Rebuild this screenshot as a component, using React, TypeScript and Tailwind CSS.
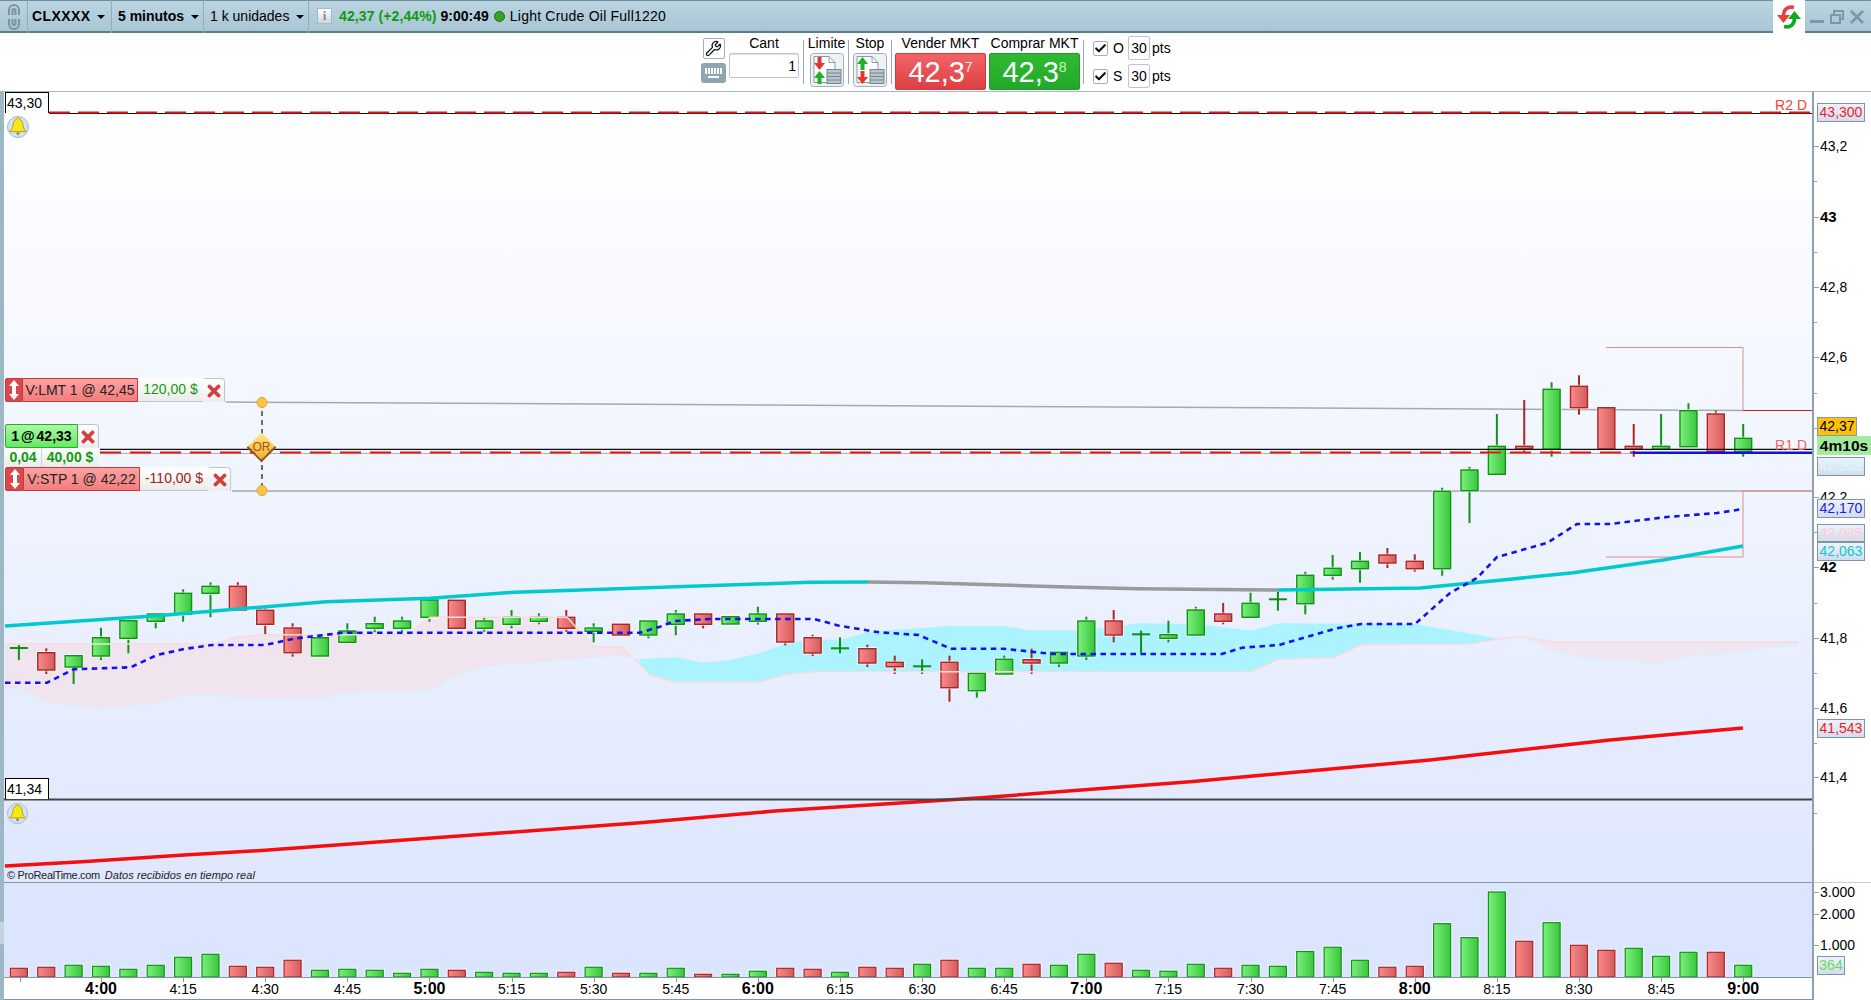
import { Check, Wrench } from "lucide-react";

const barX = (i: number) => 101 + 27.37 * i;

type Candle = [number, number, number, number, "g" | "r" | "d"];

// body top, body bottom, wick top, wick bottom. first entry is bar -3
const candles: Candle[] = [
  [648, 648, 645, 660, "d"],
  [652.7, 670, 648.3, 674, "r"],
  [655.7, 667, 655.7, 684, "g"],
  [637.7, 656, 627.7, 660, "g"],
  [620.7, 638.3, 619.3, 653.3, "g"],
  [614, 621.3, 613.3, 628.3, "g"],
  [593.3, 614.3, 589.3, 621.7, "g"],
  [586.3, 593.3, 582.3, 617.3, "g"],
  [586.3, 610, 582.3, 610, "r"],
  [610.3, 624.3, 608.3, 634.7, "r"],
  [628, 652.7, 623.3, 656.7, "r"],
  [637.7, 656, 635.7, 656, "g"],
  [631, 642.3, 623.3, 642.3, "g"],
  [623.7, 628.3, 616.7, 632.3, "g"],
  [621, 628.3, 616.7, 631.7, "g"],
  [600, 617.3, 598.3, 621.7, "g"],
  [600.3, 628.3, 600.3, 628.3, "r"],
  [621, 628.3, 617.3, 631.7, "g"],
  [617.3, 624.3, 610, 628.3, "g"],
  [617.3, 621.3, 613.3, 624.3, "g"],
  [617.3, 628.3, 610, 631.7, "r"],
  [628, 631.3, 623.3, 642.3, "g"],
  [624.3, 635, 624.3, 635, "r"],
  [621, 635, 621, 638.3, "g"],
  [614, 624.3, 610, 635.3, "g"],
  [614, 624.3, 614, 628.3, "r"],
  [616.7, 624, 616.7, 624, "g"],
  [614, 621.3, 606.7, 624.7, "g"],
  [614, 642, 614, 645.3, "r"],
  [637.7, 653, 634.7, 656, "r"],
  [648.3, 648.3, 637.3, 653.3, "d"],
  [648.7, 663, 644.7, 667, "r"],
  [662.3, 666.7, 655.7, 674, "r"],
  [666.3, 666.3, 659.3, 674, "d"],
  [662.3, 687.7, 655.7, 701.7, "r"],
  [673.3, 690.7, 673.3, 697.7, "g"],
  [659.3, 674, 655.7, 674, "g"],
  [659.7, 663, 648.7, 674, "r"],
  [652.3, 663, 652.3, 667, "g"],
  [621, 656, 616.7, 660, "g"],
  [621, 635, 610, 642.3, "r"],
  [634.3, 634.3, 630.7, 653.3, "d"],
  [634.7, 638.3, 620.7, 642.3, "g"],
  [610, 635, 606.7, 635, "g"],
  [614, 621.3, 603, 624.3, "r"],
  [603.3, 617.3, 592.7, 617.3, "g"],
  [599.3, 599.3, 592, 610.7, "d"],
  [575.3, 603.7, 571.7, 614.3, "g"],
  [568.3, 575.3, 555, 579.7, "g"],
  [561.3, 568.7, 552, 582.7, "g"],
  [555, 563, 548, 568, "r"],
  [561.3, 568.7, 554.3, 571.7, "r"],
  [491.3, 568.7, 487.7, 575.7, "g"],
  [470, 490.7, 466.7, 523, "g"],
  [446.3, 474.3, 414, 474.3, "g"],
  [446.3, 449, 400, 452.7, "r"],
  [389.3, 449.3, 382.3, 456.7, "g"],
  [386.3, 407.7, 375.3, 414.7, "r"],
  [407.7, 449, 407.7, 449, "r"],
  [446.3, 449.3, 424, 456.7, "r"],
  [446.3, 449.3, 414, 449.3, "g"],
  [410.7, 446.7, 403.3, 446.7, "g"],
  [414, 451.7, 410.7, 451.7, "r"],
  [438.3, 452, 424, 456.7, "g"],
];

// top y of each volume bar, same order as candles
const volumes: [number, "g" | "r"][] = [
  [968.3, "r"], [967.3, "r"], [965.3, "g"], [966.3, "g"], [969.3, "g"], [965.3, "g"], [957.3, "g"], [954.3, "g"],
  [966.3, "r"], [967.3, "r"], [960.3, "r"], [970.3, "g"], [969.3, "g"], [970.3, "g"], [973.3, "g"], [969.3, "g"],
  [970.3, "r"], [972.3, "g"], [973.3, "g"], [973.3, "g"], [972.3, "r"], [967.3, "g"], [973.3, "r"], [973.3, "g"],
  [968.3, "g"], [974.3, "r"], [974.3, "g"], [971.3, "g"], [968.3, "r"], [969.3, "r"], [972.3, "g"], [967.3, "r"],
  [968.3, "r"], [964.3, "g"], [960.3, "r"], [968.3, "g"], [968.3, "g"], [964.3, "r"], [965.3, "g"], [954.3, "g"],
  [963.3, "r"], [970.3, "g"], [971.3, "g"], [964.3, "g"], [968.3, "r"], [965.3, "g"], [966.3, "g"], [951.5, "g"],
  [947.3, "g"], [960.3, "g"], [967.3, "r"], [966.3, "r"], [923.7, "g"], [937.7, "g"], [892, "g"], [941.3, "r"],
  [922.7, "g"], [945.3, "r"], [950.3, "r"], [948.3, "g"], [956.3, "g"], [952.3, "g"], [952.3, "r"], [965.3, "g"],
];

const pts = (a: number[][]) => a.map((p) => p.join(",")).join(" ");

const tealA = [[5, 626], [157, 615.7], [326, 601.7], [430, 598.3], [514, 592.3], [640, 588], [809, 582.3], [868, 582]];
const tealGrey = [[868, 582], [924, 582.7], [1058, 586.7], [1137, 588.7], [1278, 590]];
const tealB = [[1278, 590], [1420, 588], [1510, 579.3], [1573, 572.7], [1663, 560], [1743, 546]];
const blue = [
  [5, 682.7], [47, 682.7], [73.5, 669.3], [130.6, 667.3], [157, 655], [184, 649], [212, 645], [265, 645], [294, 638.7],
  [343, 632.7], [640, 632.7], [660, 626.7], [675, 621], [710, 619], [814, 619], [839, 625.7], [879, 632.3], [918.6, 635],
  [951, 648.7], [1003, 648.7], [1053, 654], [1222, 654], [1242, 647.7], [1279, 645], [1336.5, 628.3], [1361, 624],
  [1415, 624], [1450, 593], [1477, 578], [1497, 557], [1547, 543], [1577, 524], [1610, 524], [1667, 517], [1717, 513], [1743, 509],
];
const red = [
  [5, 866], [82, 861.7], [184, 855], [265, 850.3], [640, 822.7], [775, 811], [978, 798], [1193, 781.5], [1430, 760], [1610, 740], [1687, 733], [1743, 728],
];

const pinkTop = [
  [5, 644], [216, 644], [239, 636.7], [261, 634.7], [408, 634.7], [430, 617.3], [567, 617.3], [594, 646.7], [621.6, 646.7], [640, 665],
];
const pinkBottom = [
  [5, 689], [20, 689], [47, 703.3], [102, 709], [159, 704], [184, 696], [210, 695], [261, 700], [320, 699.3], [347, 693.3],
  [430.6, 691], [457, 675.7], [486, 666.7], [551, 661.7], [620, 656], [640, 659.3],
];
const cyanTop = [
  [640, 659.3], [676, 657.3], [703, 662.7], [730, 660], [759, 653.3], [787, 642.7], [814, 639.3], [840, 640], [869, 631.7],
  [948.5, 626], [1003, 626], [1030.5, 630.3], [1085, 630.3], [1140, 623.3], [1196, 624], [1251, 630.7], [1279, 623.3],
  [1415, 624], [1500, 639],
];
const cyanBottom = [
  [640, 665], [650, 675], [676, 682.3], [759, 682.3], [787, 674.3], [814, 671.7], [1251, 671.7], [1279, 659.3], [1334, 657.7],
  [1361, 644.7], [1470, 644], [1500, 639],
];
const pink2Top = [[1500, 639], [1523, 636.7], [1551.7, 642], [1798, 642]];
const pink2Bottom = [[1523, 636.7], [1551.7, 651.7], [1580, 658.3], [1661.7, 664], [1688, 656.7], [1743, 653.3], [1770, 647.7], [1798, 646]];

const band = (top: number[][], bottom: number[][]) => pts([...top, ...[...bottom].reverse()]);

const times = [
  { t: "4:00", i: 0, b: true }, { t: "4:15", i: 3 }, { t: "4:30", i: 6 }, { t: "4:45", i: 9 },
  { t: "5:00", i: 12, b: true }, { t: "5:15", i: 15 }, { t: "5:30", i: 18 }, { t: "5:45", i: 21 },
  { t: "6:00", i: 24, b: true }, { t: "6:15", i: 27 }, { t: "6:30", i: 30 }, { t: "6:45", i: 33 },
  { t: "7:00", i: 36, b: true }, { t: "7:15", i: 39 }, { t: "7:30", i: 42 }, { t: "7:45", i: 45 },
  { t: "8:00", i: 48, b: true }, { t: "8:15", i: 51 }, { t: "8:30", i: 54 }, { t: "8:45", i: 57 },
  { t: "9:00", i: 60, b: true },
];

const axisTicks = [
  { t: "43,2", y: 146 }, { t: "43", y: 216.5, b: true }, { t: "42,8", y: 287 }, { t: "42,6", y: 357 },
  { t: "42,2", y: 497 }, { t: "42", y: 567, b: true }, { t: "41,8", y: 637.7 }, { t: "41,6", y: 708 }, { t: "41,4", y: 777 },
];
const minorTicks = [181, 252, 322, 393, 428, 532, 603, 673, 743, 813];

const volTicks = [
  { t: "3.000", y: 891.5 }, { t: "2.000", y: 914 }, { t: "1.000", y: 945 },
];

const Caret = () => (
  <span className="ml-[7px] mt-[1px] h-0 w-0 border-x-[4px] border-t-[4px] border-x-transparent border-t-black" />
);

const Bell = ({ className }: { className: string }) => (
  <svg viewBox="0 0 24 24" className={className}>
    <circle cx="12" cy="12" r="11.500" fill="#d3e2ec" stroke="#9fb5c3" />
    <path d="M12 2c-1 0-1.700.7-1.700 1.600-2.600.8-3.500 3.300-3.700 6-.2 3-1.400 5.200-3.600 7.400h18c-2.200-2.200-3.400-4.400-3.600-7.400-.2-2.700-1.100-5.200-3.700-6C13.700 2.700 13 2 12 2z" fill="#f7e815" stroke="#988a10" strokeWidth="0.800" />
    <path d="M10 18h4l-2 3.500z" fill="#8f8210" />
  </svg>
);

const CloseX = () => (
  <svg viewBox="0 0 14 14" className="h-[14px] w-[14px]">
    <path d="M2.500 2.500l9 9M11.500 2.500l-9 9" stroke="#d23f3f" strokeWidth="3.800" strokeLinecap="round" />
  </svg>
);

const UpDown = () => (
  <svg viewBox="0 0 12 20" className="h-[20px] w-[12px]">
    <path d="M6 0l5 6H8v8h3l-5 6-5-6h3V6H1z" fill="#fff" />
  </svg>
);

const ArrowDown = ({ y }: { y: number }) => (
  <path d="M-2 0h4v6h3.500l-5.500 7-5.500-7H-2z" transform={`translate(9.500 ${y})`} fill="#e6352f" />
);
const ArrowUp = ({ y }: { y: number }) => (
  <path d="M0 0l5.500 7H2v6h-4V7h-3.500z" transform={`translate(9.500 ${y})`} fill="#1fb027" />
);

const OrderIcon = ({ flip }: { flip?: boolean }) => (
  <svg viewBox="0 0 34 34" className="h-[34px] w-[34px]">
    <rect x="0.500" y="0.500" width="33" height="33" rx="3" fill="#eef2f5" stroke="#9fb0ba" />
    <path d="M4 3.500h15l6 6v20H4z" fill="#fff" stroke="#8a9aa3" />
    <path d="M19 3.500v6h6" fill="none" stroke="#8a9aa3" />
    {flip ? <ArrowUp y={4} /> : <ArrowDown y={4} />}
    {flip ? <ArrowDown y={18} /> : <ArrowUp y={18} />}
    <rect x="17" y="16.500" width="14" height="14" fill="#b9c4cb" stroke="#78878f" />
    <path d="M17 20h14M17 23.500h14M17 27h14" stroke="#78878f" />
  </svg>
);

const Sep = () => <span className="mt-[7px] block h-[44px] w-[1px] shrink-0 bg-[#9aa9b2]" />;

const Tag = ({ className, children }: { className: string; children: React.ReactNode }) => (
  <div className={`flex items-center justify-center whitespace-nowrap text-[14px] ${className}`}>{children}</div>
);

function PriceChart() {
  return (
    <svg viewBox="4 92 1808 790" className="absolute inset-0 h-[790px] w-[1808px]">
      <defs>
        <linearGradient id="cg" x1="0" x2="1" y1="0" y2="0">
          <stop offset="0" stopColor="#7cf07c" />
          <stop offset="1" stopColor="#39c63d" />
        </linearGradient>
        <linearGradient id="cr" x1="0" x2="1" y1="0" y2="0">
          <stop offset="0" stopColor="#fb8a8a" />
          <stop offset="1" stopColor="#d35c5c" />
        </linearGradient>
      </defs>

      <polygon points={band(pinkTop, pinkBottom)} fill="#f0e5ee" />
      <polygon points={band(cyanTop, cyanBottom)} fill="#aaf3ff" />
      <polygon points={band(pink2Top.slice(1), pink2Bottom)} fill="#efe6f2" />

      {/* order and level lines */}
      <line x1="100" x2="1633" y1="453.500" y2="453.500" stroke="#b4b4b4" />
      <line x1="226" x2="1743" y1="402" y2="410.500" stroke="#a9a9a9" strokeWidth="1.500" />
      <line x1="232" x2="1743" y1="491" y2="491" stroke="#a9a9a9" strokeWidth="1.500" />
      <polyline points="1606,347.500 1743,347.500 1743,410.500" fill="none" stroke="#e08c8c" />
      <line x1="1743" x2="1812" y1="410.500" y2="410.500" stroke="#b02a2a" />
      <polyline points="1606,557 1743,557 1743,491" fill="none" stroke="#e08c8c" />
      <line x1="1743" x2="1812" y1="491" y2="491" stroke="#bb4a4a" />

      {candles.map(([top, bot, wt, wb, kind], n) => {
        const x = barX(n - 3);
        if (kind === "d") {
          return (
            <g key={n} stroke="#0f8f14" strokeWidth="2">
              <line x1={x} x2={x} y1={wt} y2={wb} />
              <line x1={x - 9} x2={x + 9} y1={top} y2={top} />
            </g>
          );
        }
        const edge = kind === "g" ? "#119416" : "#ab2626";
        return (
          <g key={n}>
            <line x1={x} x2={x} y1={wt} y2={wb} stroke={edge} strokeWidth="2" />
            <rect x={x - 9.500} y={top - 1} width="19" height={bot - top + 2} fill="none" stroke="#fff" strokeOpacity="0.800" />
            <rect x={x - 8.500} y={top} width="17" height={bot - top} fill={`url(#c${kind})`} stroke={edge} strokeWidth="1.400" />
          </g>
        );
      })}

      <polyline points={pts(pinkTop)} fill="none" stroke="#fbdada" strokeWidth="1.500" />
      <polyline points={pts(pinkBottom)} fill="none" stroke="#d4f6fb" strokeWidth="1.200" />
      <polyline points={pts(cyanBottom)} fill="none" stroke="#fbdada" strokeWidth="1.500" />
      <polyline points={pts(pink2Top)} fill="none" stroke="#fbdada" strokeWidth="1.500" />
      <polyline points={pts(pink2Bottom)} fill="none" stroke="#d4f6fb" strokeWidth="1.200" />

      <line x1="49" x2="1812" y1="113.500" y2="113.500" stroke="#111" strokeWidth="1" />
      <line x1="49" x2="1812" y1="112.500" y2="112.500" stroke="#e2141c" strokeWidth="2" strokeDasharray="21 8" />

      <line x1="100" x2="1812" y1="449.300" y2="449.300" stroke="#111" strokeWidth="1.200" />
      <line x1="100" x2="1633" y1="452.500" y2="452.500" stroke="#ee1111" strokeWidth="2" strokeDasharray="21 9" />
      <line x1="1633" x2="1812" y1="452.700" y2="452.700" stroke="#1111dd" strokeWidth="2.400" />

      <polyline points={pts(tealA)} fill="none" stroke="#02c9cd" strokeWidth="3.500" />
      <polyline points={pts(tealGrey)} fill="none" stroke="#9a9a9a" strokeWidth="3.500" />
      <polyline points={pts(tealB)} fill="none" stroke="#02c9cd" strokeWidth="3.500" />
      <polyline points={pts(blue)} fill="none" stroke="#1212ee" strokeWidth="2.600" strokeDasharray="5.500 4.500" />
      <polyline points={pts(red)} fill="none" stroke="#f60d0d" strokeWidth="3.500" />

      <line x1="262" x2="262" y1="402" y2="491" stroke="#111" strokeWidth="1.200" strokeDasharray="5 4" />
      <circle cx="262" cy="402.500" r="5" fill="#ffc440" stroke="#dca23a" />
      <circle cx="262" cy="490.500" r="5" fill="#ffc440" stroke="#dca23a" />

      <line x1="4" x2="1812" y1="799.500" y2="799.500" stroke="#444" strokeWidth="2" />
    </svg>
  );
}

function VolumeChart() {
  return (
    <svg viewBox="4 883 1808 94" className="h-[94px] w-[1808px]">
      <defs>
        <linearGradient id="vg" x1="0" x2="1" y1="0" y2="0">
          <stop offset="0" stopColor="#7cf07c" />
          <stop offset="1" stopColor="#39c63d" />
        </linearGradient>
        <linearGradient id="vr" x1="0" x2="1" y1="0" y2="0">
          <stop offset="0" stopColor="#fb8a8a" />
          <stop offset="1" stopColor="#d35c5c" />
        </linearGradient>
      </defs>
      {volumes.map(([top, kind], n) => {
        const x = barX(n - 3);
        const edge = kind === "g" ? "#119416" : "#ab2626";
        return (
          <g key={n}>
            <rect x={x - 9.500} y={top - 1} width="19" height={977 - top} fill="none" stroke="#fff" strokeOpacity="0.800" />
            <rect x={x - 8.500} y={top} width="17" height={977 - top} fill={`url(#v${kind})`} stroke={edge} strokeWidth="1.200" />
          </g>
        );
      })}
    </svg>
  );
}

export default function App() {
  return (
    <div className="flex h-[1000px] w-[1871px] flex-col overflow-hidden bg-white font-['Liberation_Sans',Arial,sans-serif] text-[14px] text-black">
      {/* top toolbar */}
      <div className="flex h-[33px] shrink-0 items-stretch bg-linear-to-b from-[#bcd5e1] to-[#a6c5d4] shadow-[inset_0_-2px_0_#5d7d8b,inset_0_1px_0_#6f909f]">
        <div className="flex w-[28px] items-center justify-center border-r border-[#8fb0bf]">
          <svg viewBox="0 0 14 26" className="h-[26px] w-[14px]" fill="none" stroke="#7f929c" strokeWidth="2">
            <path d="M2 11V6a5 5 0 0 1 10 0v5M5.500 11V6.500a1.500 1.500 0 0 1 3 0V11" />
            <path d="M2 15v5a5 5 0 0 0 10 0v-5M5.500 15v4.500a1.500 1.500 0 0 0 3 0V15" />
          </svg>
        </div>
        <div className="flex w-[84px] items-center border-r border-[#8fb0bf] pb-[1px] pl-[4px] font-bold tracking-[0.4px]">
          CLXXXX
          <Caret />
        </div>
        <div className="flex w-[92px] items-center border-r border-[#8fb0bf] pb-[1px] pl-[6px] font-bold">
          5 minutos
          <Caret />
        </div>
        <div className="flex w-[105px] items-center border-r border-[#8fb0bf] pb-[1px] pl-[6px]">
          1 k unidades
          <Caret />
        </div>
        <div className="flex flex-1 items-center pb-[1px] pl-[8px]">
          <span className="flex h-[16px] w-[15px] items-center justify-center border border-[#a9b9c1] bg-linear-to-b from-white to-[#ccd6db] font-['Liberation_Serif',serif] text-[13px] font-bold text-[#7b8b93]">
            i
          </span>
          <span className="ml-[7px] font-bold tracking-[0.1px] text-[#109a10]">42,37 (+2,44%)</span>
          <span className="ml-[4px] font-bold">9:00:49</span>
          <span className="ml-[5px] h-[11px] w-[11px] rounded-full border border-[#1a6b12] bg-[#35a51f]" />
          <span className="ml-[5px] tracking-[0.22px]">Light Crude Oil Full1220</span>
        </div>
        <div className="flex w-[32px] items-center justify-center bg-white">
          <svg viewBox="0 0 28 24" className="h-[24px] w-[28px]">
            <path d="M19 2.500C12 1 8.500 5 8.500 11" fill="none" stroke="#e8403f" strokeWidth="3.600" />
            <path d="M2 10h13l-6.500 8z" fill="#e8403f" />
            <path d="M9 21.500c7 1.500 10.500-2.500 10.500-8.500" fill="none" stroke="#10a81a" strokeWidth="3.600" />
            <path d="M13 14h13l-6.500-8z" fill="#10a81a" />
          </svg>
        </div>
        <div className="flex w-[66px] items-center gap-[6px] pl-[5px]">
          <span className="mt-[10px] h-[3px] w-[14px] bg-[#7d98a5]" />
          <svg viewBox="0 0 14 14" className="h-[14px] w-[14px]" fill="none" stroke="#7d98a5" strokeWidth="2">
            <path d="M4 4V1h9v8h-3M1 5h9v8H1z" />
          </svg>
          <svg viewBox="0 0 14 14" className="h-[14px] w-[14px]" fill="none" stroke="#7d98a5" strokeWidth="2.800">
            <path d="M1 1l12 12M13 1L1 13" />
          </svg>
        </div>
      </div>

      {/* trade bar */}
      <div className="flex h-[59px] shrink-0 items-start border-b border-[#a9b6bd] pl-[701px] leading-none">
        <div className="flex w-[25px] flex-col items-center pt-[5px]">
          <span className="flex h-[21px] w-[22px] items-center justify-center rounded-[2px] border border-[#a0aeb6] bg-white">
            <Wrench size={17} strokeWidth={1.800} color="#111" />
          </span>
          <span className="mt-[4px] flex h-[20px] w-[25px] flex-col items-center justify-center gap-[2px] rounded-[3px] bg-[#8fa5b1]">
            <span className="h-[6px] w-[17px] bg-[repeating-linear-gradient(90deg,#fff_0_2px,transparent_2px_3px)]" />
            <span className="h-[2px] w-[11px] bg-white" />
          </span>
        </div>
        <div className="ml-[3px] flex w-[70px] flex-col items-center">
          <div className="flex h-[20px] items-center">Cant</div>
          <div className="flex h-[25px] w-full items-center justify-end rounded-[2px] border border-[#bcc6cc] pr-[2px] shadow-[inset_0_1px_1px_#ddd]">1</div>
        </div>
        <span className="ml-[4px]"><Sep /></span>
        <div className="ml-[5px] flex w-[35px] flex-col items-center">
          <div className="flex h-[20px] items-center">Limite</div>
          <OrderIcon />
        </div>
        <span className="ml-[4px]"><Sep /></span>
        <div className="ml-[4px] flex w-[34px] flex-col items-center">
          <div className="flex h-[20px] items-center">Stop</div>
          <OrderIcon flip />
        </div>
        <span className="ml-[4px]"><Sep /></span>
        <div className="ml-[3px] flex w-[91px] flex-col items-center">
          <div className="flex h-[20px] items-center whitespace-nowrap">Vender MKT</div>
          <div className="flex h-[37px] w-full items-start justify-center rounded-[2px] border border-[#d63a3d] bg-linear-to-b from-[#f26366] to-[#dc3f43] pt-[4px] text-[29px] text-white">
            42,3<span className="mt-[2px] text-[14px] leading-none text-[#ffeaea]">7</span>
          </div>
        </div>
        <div className="ml-[3px] flex w-[91px] flex-col items-center">
          <div className="flex h-[20px] items-center whitespace-nowrap">Comprar MKT</div>
          <div className="flex h-[37px] w-full items-start justify-center rounded-[2px] border border-[#1c9a2a] bg-linear-to-b from-[#2fba32] to-[#22a82a] pt-[4px] text-[29px] text-white">
            42,3<span className="mt-[2px] text-[14px] leading-none text-[#c6f8be]">8</span>
          </div>
        </div>
        <span className="ml-[3px]"><Sep /></span>
        <div className="ml-[9px] flex flex-col gap-[4px] pt-[3px]">
          {["O", "S"].map((label) => (
            <div key={label} className="flex h-[24px] items-center">
              <span className="flex h-[15px] w-[15px] items-center justify-center rounded-[2px] border border-[#9fb0ba] bg-white">
                <Check size={13} strokeWidth={4} color="#111" />
              </span>
              <span className="ml-[5px] w-[15px]">{label}</span>
              <span className="flex h-[24px] w-[22px] items-center justify-center rounded-[2px] border border-[#bcc6cc]">30</span>
              <span className="ml-[2px]">pts</span>
            </div>
          ))}
        </div>
      </div>

      {/* chart body */}
      <div className="flex min-h-0 flex-1">
        <div className="relative w-[4px] shrink-0 bg-[#9db7c5]">
          <span className="absolute left-0 top-[830px] h-[22px] w-[4px] bg-[#c2d4dd]" />
        </div>
        <div className="flex w-[1808px] shrink-0 flex-col">
          <div className="relative h-[790px] shrink-0 overflow-hidden bg-linear-to-b from-white via-[#eef3fe] via-55% to-[#dfe7fe]">
            <PriceChart />

            <div className="absolute left-[1px] top-0 flex h-[21px] w-[44px] items-center border border-b-0 border-black bg-white pl-[1px]">43,30</div>
            <Bell className="absolute left-[3px] top-[24px] h-[22px] w-[22px]" />
            <div className="absolute right-[5px] top-[3px] text-[#f4442e]">R2 D</div>
            <div className="absolute right-[5px] top-[343px] text-[#f6605a]">R1 D</div>

            {/* order tags */}
            <div className="absolute left-[1px] top-[286px] flex h-[24px]">
              <Tag className="w-[18px] rounded-l-[2px] border border-[#c23a3a] bg-[#d8484c]"><UpDown /></Tag>
              <Tag className="w-[115px] border border-l-0 border-[#c23a3a] bg-linear-to-b from-[#fca3a3] to-[#f47c7c] text-[#222]">V:LMT 1 @ 42,45</Tag>
              <Tag className="w-[65px] border-b border-[#bcc6cc] bg-linear-to-b from-white to-[#ebebeb] text-[#129a12]">120,00 $</Tag>
              <Tag className="ml-[1px] w-[21px] rounded-tr-[4px] border-r border-t border-[#bcc6cc] bg-linear-to-b from-white to-[#ececec]"><CloseX /></Tag>
            </div>
            <div className="absolute left-[1px] top-[332px] flex h-[24px]">
              <Tag className="w-[73px] rounded-l-[2px] border border-[#2faa2f] bg-linear-to-b from-[#a9f9a3] to-[#63ea5e] font-bold [word-spacing:-2px]">1 @ 42,33</Tag>
              <Tag className="w-[21px] rounded-tr-[4px] border-r border-t border-[#bcc6cc] bg-linear-to-b from-white to-[#ececec]"><CloseX /></Tag>
            </div>
            <div className="absolute left-[1px] top-[356px] flex h-[19px]">
              <Tag className="w-[37px] border-r border-[#ccd4d8] bg-linear-to-b from-white to-[#ebebeb] font-bold text-[#129a12]">0,04</Tag>
              <Tag className="w-[56px] bg-linear-to-b from-white to-[#ebebeb] font-bold text-[#129a12]">40,00 $</Tag>
            </div>
            <div className="absolute left-[1px] top-[375px] flex h-[24px]">
              <Tag className="w-[19px] rounded-l-[2px] border border-[#c23a3a] bg-[#d8484c]"><UpDown /></Tag>
              <Tag className="w-[116px] border border-l-0 border-[#c23a3a] bg-linear-to-b from-[#fca3a3] to-[#f47c7c] text-[#222]">V:STP 1 @ 42,22</Tag>
              <Tag className="w-[68px] border-b border-[#bcc6cc] bg-linear-to-b from-white to-[#ebebeb] text-[#a02020]">-110,00 $</Tag>
              <Tag className="ml-[1px] w-[22px] rounded-tr-[4px] border-r border-t border-[#bcc6cc] bg-linear-to-b from-white to-[#ececec]"><CloseX /></Tag>
            </div>

            {/* OR marker */}
            <span className="absolute left-[247px] top-[345px] h-[21px] w-[21px] rotate-45 border-b-2 border-r-2 border-[#8a5a10] bg-linear-to-br from-[#ffe88a] to-[#f5ac1f]" />
            <span className="absolute left-[247px] top-[348px] w-[21px] text-center text-[12px] leading-[14px] text-[#9a5a08]">OR</span>

            <div className="absolute left-[1px] top-[686px] flex h-[21px] w-[44px] items-center border border-b-0 border-black bg-white pl-[1px]">41,34</div>
            <Bell className="absolute left-[3px] top-[711px] h-[21px] w-[21px]" />
            <div className="absolute bottom-[0px] left-[3px] flex text-[11px] leading-[13px] text-[#222]">
              <span className="tracking-[-0.35px]">© ProRealTime.com</span>
              <span className="ml-[5px] italic tracking-[0.05px]">Datos recibidos en tiempo real</span>
            </div>
          </div>

          <div className="h-[1px] shrink-0 bg-[#8397a3]" />
          <div className="h-[94px] shrink-0 bg-[#dce5fe]">
            <VolumeChart />
          </div>

          {/* time axis */}
          <div className="relative flex-1 border-y border-[#8397a3] bg-white">
            {times.map(({ t, i, b }) => (
              <div key={t}>
                <span className="absolute top-0 h-[4px] w-[1px] bg-[#8397a3]" style={{ left: barX(i) - 4 }} />
                <span
                  className={`absolute top-[3px] -translate-x-1/2 leading-[16px] ${b ? "text-[16px] font-bold" : "text-[14px]"}`}
                  style={{ left: barX(i) - 4 }}
                >
                  {t}
                </span>
              </div>
            ))}
            <span className="absolute left-[16px] top-0 h-[4px] w-[1px] bg-[#8397a3]" />
          </div>
        </div>

        {/* price axis */}
        <div className="relative flex-1 border-l-2 border-[#8da2ae] bg-white">
          <span className="absolute right-0 top-[790px] h-[1px] w-full bg-[#c6d0d6]" />
          {minorTicks.map((y) => (
            <span key={y} className="absolute left-0 h-[1px] w-[3px] bg-[#8da2ae]" style={{ top: y - 92 }} />
          ))}
          {axisTicks.map(({ t, y, b }) => (
            <div key={t}>
              <span className="absolute left-0 h-[1px] w-[5px] bg-[#8da2ae]" style={{ top: y - 92 }} />
              <span
                className={`absolute left-[6px] -translate-y-1/2 leading-[16px] ${b ? "text-[15px] font-bold" : "text-[14px]"}`}
                style={{ top: y - 92 }}
              >
                {t}
              </span>
            </div>
          ))}
          {volTicks.map(({ t, y }) => (
            <div key={t}>
              <span className="absolute left-0 h-[1px] w-[5px] bg-[#8da2ae]" style={{ top: y - 92 }} />
              <span className="absolute left-[6px] -translate-y-1/2 leading-[16px]" style={{ top: y - 92 }}>{t}</span>
            </div>
          ))}

          <div className="absolute left-[3px] top-[11px] flex h-[19px] w-[48px] items-center justify-center border border-[#7f95a2] bg-linear-to-b from-[#eef2fb] to-[#d3ddf0] text-[#f01c1c]">43,300</div>
          <div className="absolute left-[3px] top-[325px] flex h-[19px] w-[40px] items-center justify-center border border-[#8a99a3] bg-[#ffc107]">42,37</div>
          <div className="absolute left-[3px] top-[344px] flex h-[19px] w-[54px] items-center justify-center bg-[#a4eb9f] text-[15.500px] font-bold">4m10s</div>
          <div className="absolute left-[3px] top-[365px] flex h-[19px] w-[48px] items-center justify-center border border-[#7f95a2] bg-linear-to-b from-[#eef2fb] to-[#d3ddf0] text-[#d3fbff]">42,303</div>
          <div className="absolute left-[3px] top-[407px] flex h-[19px] w-[48px] items-center justify-center border border-[#7f95a2] bg-linear-to-b from-[#eef2fb] to-[#d3ddf0] text-[#1a1aee]">42,170</div>
          <div className="absolute left-[3px] top-[432px] flex h-[18px] w-[48px] items-center justify-center border border-[#7f95a2] bg-linear-to-b from-[#eef2fb] to-[#d3ddf0] text-[#fbcfcf]">42,085</div>
          <div className="absolute left-[3px] top-[450px] flex h-[19px] w-[48px] items-center justify-center border border-[#7f95a2] bg-linear-to-b from-[#eef2fb] to-[#d3ddf0] text-[#0cc9cf]">42,063</div>
          <div className="absolute left-[3px] top-[627px] flex h-[19px] w-[48px] items-center justify-center border border-[#7f95a2] bg-linear-to-b from-[#eef2fb] to-[#d3ddf0] text-[#f01c1c]">41,543</div>
          <div className="absolute left-[3px] top-[864px] flex h-[19px] w-[28px] items-center justify-center border border-[#7f95a2] bg-linear-to-b from-[#eef2fb] to-[#d3ddf0] text-[#5fdc5f]">364</div>
        </div>
      </div>
    </div>
  );
}
